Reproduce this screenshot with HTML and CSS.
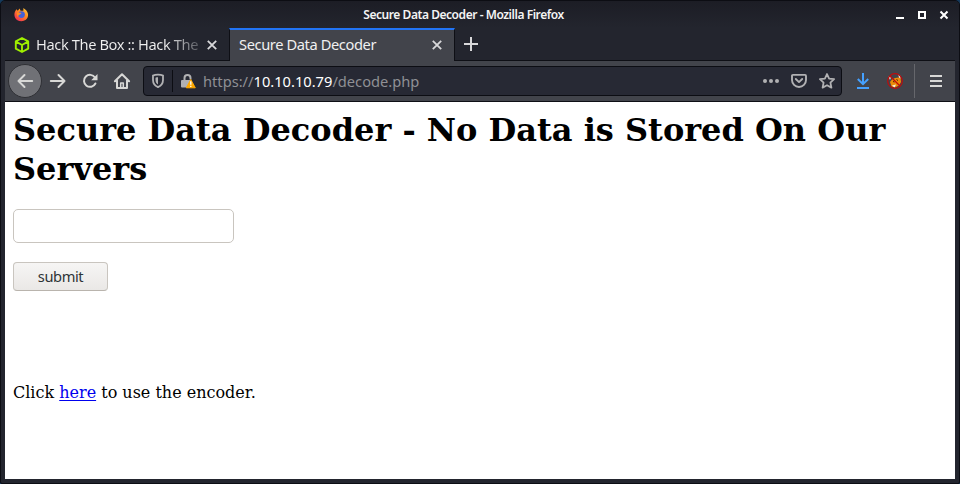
FILE: index.html
```html
<!DOCTYPE html>
<html lang="en">
<head>
<meta charset="utf-8">
<title>Secure Data Decoder</title>
<link rel="stylesheet" href="styles.css">
</head>
<body>
<div class="window">
  <header class="titlebar">
    <svg class="fox" width="16" height="16" viewBox="0 0 16 16"><defs><linearGradient id="flame" x1="1" y1="0" x2="0.2" y2="1"><stop offset="0" stop-color="#ffda45"/><stop offset=".45" stop-color="#ff8a20"/><stop offset="1" stop-color="#f02858"/></linearGradient></defs><path d="M1 5 2.5 2.5 4 4 6 1.5 7 4h3L10 1l3 2.5C17 8 15 15 8 15.2 1 15-.6 9 1 5z" fill="url(#flame)"/><circle cx="8" cy="8" r="3.6" fill="#4460d8"/><path d="M4 5.5 8 6.5 6.5 8 5 8.5 4 11 2.8 7z" fill="#ff8a20"/></svg>
    <h2 class="caption">Secure Data Decoder - Mozilla Firefox</h2>
    <svg class="controls" width="50" height="10" viewBox="0 0 50 10"><path d="M0 8h8" stroke="#fff" stroke-width="2"/><path d="M23 2h6v6h-6z" fill="none" stroke="#fff" stroke-width="2"/><path d="m44.5 1.5 7 7m0-7-7 7" stroke="#fff" stroke-width="2"/></svg>
  </header>
  <nav class="tabs">
    <div class="tab">
      <svg width="16" height="16" viewBox="0 0 16 16" fill="none" stroke="#9fef00" stroke-width="1.9" stroke-linejoin="round"><path d="M8 1 14.2 4.3v7.4L8 15 1.8 11.7V4.3zM2 4.6 8 8l6-3.4M8 8v7"/></svg>
      <span class="label fade">Hack The Box :: Hack The</span>
      <svg class="close" width="10" height="10" viewBox="0 0 10 10"><path d="m.8.8 8.4 8.4m0-8.4L.8 9.2"/></svg>
    </div>
    <div class="tab active">
      <span class="label">Secure Data Decoder</span>
      <svg class="close" width="10" height="10" viewBox="0 0 10 10"><path d="m.8.8 8.4 8.4m0-8.4L.8 9.2"/></svg>
    </div>
    <svg class="plus" width="14" height="14" viewBox="0 0 14 14"><path d="M0 7h14M7 0v14"/></svg>
  </nav>
  <div class="toolbar">
    <div class="back"><svg class="ico" width="16" height="16" viewBox="0 0 16 16"><path d="M15.2 8H1.5M7.5 2l-6 6 6 6"/></svg></div>
    <svg class="ico forward" width="16" height="16" viewBox="0 0 16 16"><path d="M.8 8h13.7M8.5 2l6 6-6 6"/></svg>
    <svg class="ico reload" width="16" height="16" viewBox="0 0 16 16"><path d="M13.4 10.5A6 6 0 1 1 13 4.5"/><path d="M15.5 1v6.3H9.2z" fill="#d8d8d6" stroke="none"/></svg>
    <svg class="ico home" width="16" height="16" viewBox="0 0 16 16"><path d="m.9 8.3 7.1-7 7.1 7M3 7.5V15h10V7.5"/><path d="M6.7 15v-5h2.6v5" stroke-width="1.5"/></svg>
    <div class="urlbar">
      <svg class="shield" width="14" height="16" viewBox="0 0 14 16"><path d="M7 1.7c2 0 4 .4 5 .9v4.3c0 3.3-2 5.8-5 7.2-3-1.4-5-3.9-5-7.2V2.6c1-.5 3-.9 5-.9z" fill="none" stroke="#b1b1b3" stroke-width="1.8"/><path d="M7 4.3c-1 0-1.8.1-2.5.4V7c0 2 .9 3.5 2.5 4.5z" fill="#b1b1b3"/></svg>
      <span class="divider"></span>
      <svg class="lock" width="16" height="16" viewBox="0 0 16 16"><path d="M3.5 8V5a3 3 0 0 1 6 0v1.5" fill="none" stroke="#b1b1b3" stroke-width="2"/><rect x="0" y="7" width="10" height="7.5" rx="1" fill="#b1b1b3"/><path d="M9.8 6.5 14.3 14.8h-9z" fill="#ffa900" stroke="#ffa900" stroke-linejoin="round"/><path d="M9.8 8.3v3.4m0 1.1v1.3" stroke="#fff" stroke-width="1.3"/></svg>
      <span class="url">https://<b>10.10.10.79</b>/decode.php</span>
      <svg class="dots" width="16" height="4" viewBox="0 0 16 4" fill="#b1b1b3"><circle cx="2" cy="2" r="2"/><circle cx="8" cy="2" r="2"/><circle cx="14" cy="2" r="2"/></svg>
      <svg class="pocket" width="16" height="16" viewBox="0 0 16 16" fill="none" stroke="#b1b1b3" stroke-width="1.9" stroke-linecap="round" stroke-linejoin="round"><path d="M2 1.9h12q1 0 1 1V7A7 7 0 0 1 1 7V2.9q0-1 1-1zM4.8 6 8 9.1 11.2 6"/></svg>
      <svg class="star" width="16" height="16" viewBox="0 0 16 16"><path d="m8 1 2.1 4.6 5 .6-3.7 3.4 1 5L8 12.2l-4.4 2.4 1-5L.9 6.2l5-.6z" fill="none" stroke="#b1b1b3" stroke-width="1.8" stroke-linejoin="round"/></svg>
    </div>
    <svg class="download" width="14" height="16" viewBox="0 0 14 16" fill="none" stroke="#45a1ff" stroke-width="2"><path d="M7 0v11M1.8 6 7 11.2 12.2 6M1 15h12"/></svg>
    <svg class="addon" width="16" height="16" viewBox="0 0 16 16"><path d="M3 9 5 6.5 8 5l3.5-.5 2 .5.5 4-2 3.5-4 2-3.5-1z" fill="#ed8b08"/><path d="m11 1 2.5 2V5.5L12 4.5zM1.5 3.5l2.5 1L3 7zM5 12.5l4-1-1.5 3z" fill="#f4eee6"/><path d="m6 8.5 1.5.5m2-2.5 1.5 1" stroke="#43210a"/><circle cx="8" cy="8" r="7.3" fill="none" stroke="#c00b0b" stroke-width="1.2"/><path d="m3 3 10 10" stroke="#c00b0b" stroke-width="1.3"/></svg>
    <span class="separator"></span>
    <svg class="menu" width="12" height="12" viewBox="0 0 12 12"><path d="M0 1h12M0 6h12M0 11h12" stroke="#d8d8d6" stroke-width="2"/></svg>
  </div>
  <main class="page">
    <h1>Secure Data Decoder - No Data is Stored On Our Servers</h1>
    <form>
      <input class="field" type="text" aria-label="Data">
      <button class="submit" type="button">submit</button>
    </form>
    <p>Click <a href="#">here</a> to use the encoder.</p>
  </main>
</div>
</body>
</html>
```
FILE: styles.css
```css
* { box-sizing: border-box; }
body {
  margin: 0;
  height: 484px;
  overflow: hidden;
  background: #153a5c;
  font-family: "Noto Sans", sans-serif;
}
svg { display: block; flex: none; overflow: visible; }
.window {
  display: flex;
  flex-direction: column;
  height: 484px;
  padding: 0 4px 4px;
  border: 1px solid #0c0d13;
  border-radius: 5px 5px 2px 2px;
  background: #23252e;
}
.titlebar {
  display: grid;
  grid-template-columns: 60px 1fr 60px;
  align-items: center;
  height: 27px;
  margin: 0 -4px;
  background: linear-gradient(#1c1d25, #23252e);
  border-radius: 4px 4px 0 0;
}
.fox { margin-left: 13px; width: 15px; height: 15px; }
.caption {
  margin: 0;
  padding-right: 33px;
  text-align: center;
  color: #f4f4f4;
  font-size: 12px;
  font-weight: 600;
  letter-spacing: -0.45px;
  line-height: 26px;
}
.controls { margin-left: -3px; }
.tabs { display: flex; height: 33px; border-bottom: 1px solid #0e0f15; }
.tab {
  display: flex;
  align-items: center;
  width: 225px;
  height: 32px;
  padding: 1px 13px 0 9px;
  color: #f0f0f0;
}
.label {
  flex: 1;
  overflow: hidden;
  padding-bottom: 2px;
  white-space: nowrap;
  font-size: 14.667px;
  letter-spacing: -0.4px;
  line-height: 24px;
}
.fade {
  margin-left: 6px;
  margin-right: 5px;
  color: transparent;
  background: linear-gradient(90deg, #f0f0f0 78%, #50525a 99%);
  background-clip: text;
}
.active {
  height: 33px;
  border-top: 2px solid #2274f5;
  border-left: 1px solid #0e0f15;
  border-right: 1px solid #0e0f15;
  width: 226px;
  margin-left: -1px;
  padding-top: 0;
  padding-right: 12px;
  padding-bottom: 1px;
  background: #42444b;
}
.close, .plus { fill: none; stroke: #d8d8da; stroke-width: 1.8; }
.plus { margin: 9px 0 0 9px; stroke-width: 2; }
.toolbar {
  display: flex;
  align-items: center;
  height: 41px;
  background: #42444b;
  border-bottom: 1px solid #0e0f15;
}
.back {
  display: flex;
  align-items: center;
  justify-content: center;
  width: 34px;
  height: 34px;
  margin-left: 3px;
  border: 1px solid #2f3035;
  border-radius: 50%;
  background: #707176;
}
.ico { fill: none; stroke: #d8d8d6; stroke-width: 2; stroke-linecap: round; stroke-linejoin: round; }
.forward { margin-left: 8px; }
.reload, .home { margin-left: 16px; }
.urlbar {
  display: flex;
  align-items: center;
  width: 699px;
  height: 30px;
  margin-left: 13px;
  border: 1px solid #0c0d13;
  border-radius: 4px;
  background: #272934;
}
.shield { margin-left: 7px; }
.divider { width: 1px; height: 22px; margin: 0 8px 0 7px; background: #0c0d13; }
.url {
  flex: 1;
  margin-left: 6px;
  color: #8f9095;
  font-size: 14.667px;
  line-height: 24px;
}
.url b { color: #fff; font-weight: 400; }
.pocket { margin-left: 12px; }
.star { margin: 0 6px 0 12px; }
.download { margin-left: 14px; }
.addon { margin-left: 17px; }
.separator { width: 1px; height: 34px; margin: 0 15px 0 11px; background: #66676c; }
.page {
  flex: 1;
  overflow: hidden;
  padding: 9px 8px 8px;
  background: #fff;
  color: #000;
  font: 16px/19px "DejaVu Serif", serif;
}
.page h1 { margin: 0 0 20px; font-size: 32px; line-height: 39px; font-weight: 700; }
.field {
  display: block;
  width: 221px;
  height: 34px;
  border: 1px solid #c9c5bf;
  border-radius: 5px;
  background: #fff;
}
.submit {
  display: block;
  width: 95px;
  height: 29px;
  margin-top: 19px;
  padding: 0 0 1px;
  border: 1px solid #c9c5bf;
  border-bottom-color: #b9b4ad;
  border-radius: 4px;
  background: linear-gradient(#f6f5f4, #eae8e6);
  color: #2e3436;
  font: 14.667px "Noto Sans", sans-serif;
  letter-spacing: -0.4px;
}
.page p { margin: 92px 0 0; }
.page a { color: #0000ee; text-underline-offset: 2px; text-decoration-thickness: 1px; }
```
